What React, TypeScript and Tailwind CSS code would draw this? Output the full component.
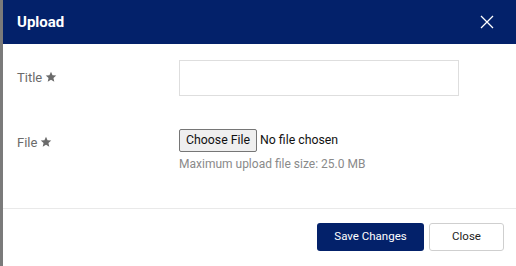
import React from "react";

function Star() {
  return (
    <svg width="12" height="12" viewBox="0 0 24 24" className="inline-block ml-[3px] -mt-[3px]" fill="#6b6b6b">
      <path d="M12 1.5l3.1 6.9 7.4.7-5.6 5 1.7 7.3L12 17.6l-6.6 3.8 1.7-7.3L1.5 9.1l7.4-.7z" />
    </svg>
  );
}

export default function App() {
  return (
    <div className="flex w-[516px] h-[266px] overflow-hidden" style={{ fontFamily: "Roboto, 'Liberation Sans', sans-serif" }}>
      <div className="w-[3px] bg-[#7a7a7a] shrink-0" />
      <div className="flex-1 flex flex-col bg-white">
        <div className="h-[44px] bg-[#03216a] flex items-center justify-between pl-[14px] pr-[22px]">
          <span className="text-white font-bold text-[15px]">Upload</span>
          <svg width="14" height="14" viewBox="0 0 14 14" stroke="white" strokeWidth="1.3" fill="none">
            <path d="M1 1l12 12M13 1L1 13" />
          </svg>
        </div>
        <div className="flex flex-col pl-[14px] pt-[16px] h-[165px] border-b border-[#e9e9e9]">
          <div className="flex items-center h-[36px]">
            <div className="w-[162px] text-[13px] text-[#6b6b6b]">
              Title<Star />
            </div>
            <input type="text" className="w-[280px] h-[36px] border border-[#dedede] outline-none" />
          </div>
          <div className="flex mt-[33px]">
            <div className="w-[162px] text-[13px] text-[#6b6b6b] pt-[4px]">
              File<Star />
            </div>
            <div className="flex flex-col">
              <input
                type="file"
                className="text-[12.3px] text-[#111] file:text-[12.3px] file:text-[#111] file:bg-[#efefef] file:border file:border-solid file:border-[#767676] file:rounded-[2px] file:px-[6px] file:h-[23px] file:mr-[3px]"
              />
              <span className="text-[12px] text-[#8a8a8a] mt-[3px]">Maximum upload file size: 25.0 MB</span>
            </div>
          </div>
        </div>
        <div className="flex justify-end gap-[5px] pr-[12px] pt-[14px]">
          <button className="w-[107px] h-[28px] bg-[#03216a] text-white text-[11.5px] rounded-[3px]">Save Changes</button>
          <button className="w-[75px] h-[28px] bg-white text-[#222] text-[11.5px] rounded-[3px] border border-[#cfcfcf]">Close</button>
        </div>
      </div>
    </div>
  );
}
